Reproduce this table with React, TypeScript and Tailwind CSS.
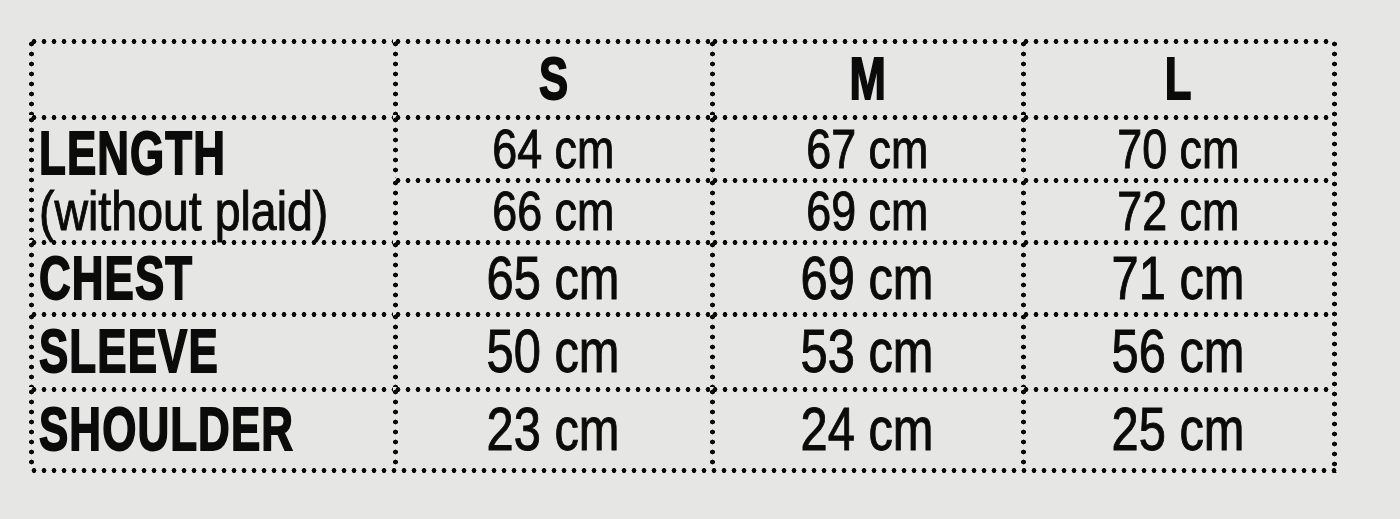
const dotCell =
  "[background-image:radial-gradient(circle,#0b0b0b_2.2px,transparent_2.7px),radial-gradient(circle,#0b0b0b_2.2px,transparent_2.7px)] [background-size:10px_5px,5px_10px] [background-repeat:repeat-x,repeat-y] [background-position:0_0,0_0]";

const dotFrame =
  "[background-image:radial-gradient(circle,#0b0b0b_2.2px,transparent_2.7px),radial-gradient(circle,#0b0b0b_2.2px,transparent_2.7px)] [background-size:5px_10px,10px_5px] [background-repeat:repeat-y,repeat-x] [background-position:right_top,left_bottom]";

const sizes = ["S", "M", "L"];

const rows = [
  { label: "CHEST", values: ["65 cm", "69 cm", "71 cm"] },
  { label: "SLEEVE", values: ["50 cm", "53 cm", "56 cm"] },
  { label: "SHOULDER", values: ["23 cm", "24 cm", "25 cm"] },
];

const lengthRows = [
  ["64 cm", "67 cm", "70 cm"],
  ["66 cm", "69 cm", "72 cm"],
];

const Value = ({ text, big }: { text: string; big?: boolean }) => (
  <div className={`${dotCell} flex items-center justify-center pt-[4px] pl-[4px]`}>
    <span
      className={`inline-block scale-x-[0.8] leading-none [-webkit-text-stroke:1px_#0b0b0b] ${
        big ? "text-[61px]" : "text-[56px]"
      }`}
    >
      {text}
    </span>
  </div>
);

const Label = ({ text }: { text: string }) => (
  <div className={`${dotCell} flex items-center pt-[4px] pl-[10px]`}>
    <span className="inline-block origin-left scale-x-[0.72] text-[61px] font-bold leading-none tracking-[1.5px] whitespace-nowrap [-webkit-text-stroke:1.8px_#0b0b0b]">
      {text}
    </span>
  </div>
);

export default function App() {
  return (
    <div className="min-h-[519px] w-full bg-[#e6e6e4] pt-[39px] pl-[29px] text-[#0b0b0b] font-['Liberation_Sans',Arial,sans-serif]">
      <div className={`${dotFrame} inline-block pr-[5px] pb-[5px]`}>
        <div className="grid grid-cols-[364px_317px_311px_311px] grid-rows-[76px_63px_62px_72px_75px_81px]">
          <div className={dotCell} />
          {sizes.map((s) => (
            <div key={s} className={`${dotCell} flex items-center justify-center pt-[5px] pl-[4px]`}>
              <span className="inline-block scale-x-[0.74] text-[59px] font-bold leading-none [-webkit-text-stroke:1.8px_#0b0b0b]">
                {s}
              </span>
            </div>
          ))}

          <div className={`${dotCell} row-span-2 flex flex-col pt-[9px] pl-[10px]`}>
            <span className="inline-block origin-left scale-x-[0.72] text-[61px] font-bold leading-[58px] tracking-[1.5px] whitespace-nowrap [-webkit-text-stroke:1.8px_#0b0b0b]">
              LENGTH
            </span>
            <span className="inline-block origin-left scale-x-[0.83] text-[56px] leading-[58px] whitespace-nowrap [-webkit-text-stroke:1px_#0b0b0b]">
              (without plaid)
            </span>
          </div>
          {lengthRows[0].map((v) => (
            <Value key={v} text={v} />
          ))}
          {lengthRows[1].map((v) => (
            <Value key={v} text={v} />
          ))}

          {rows.map((r) => (
            <div key={r.label} className="contents">
              <Label text={r.label} />
              {r.values.map((v) => (
                <Value key={v} text={v} big />
              ))}
            </div>
          ))}
        </div>
      </div>
    </div>
  );
}
